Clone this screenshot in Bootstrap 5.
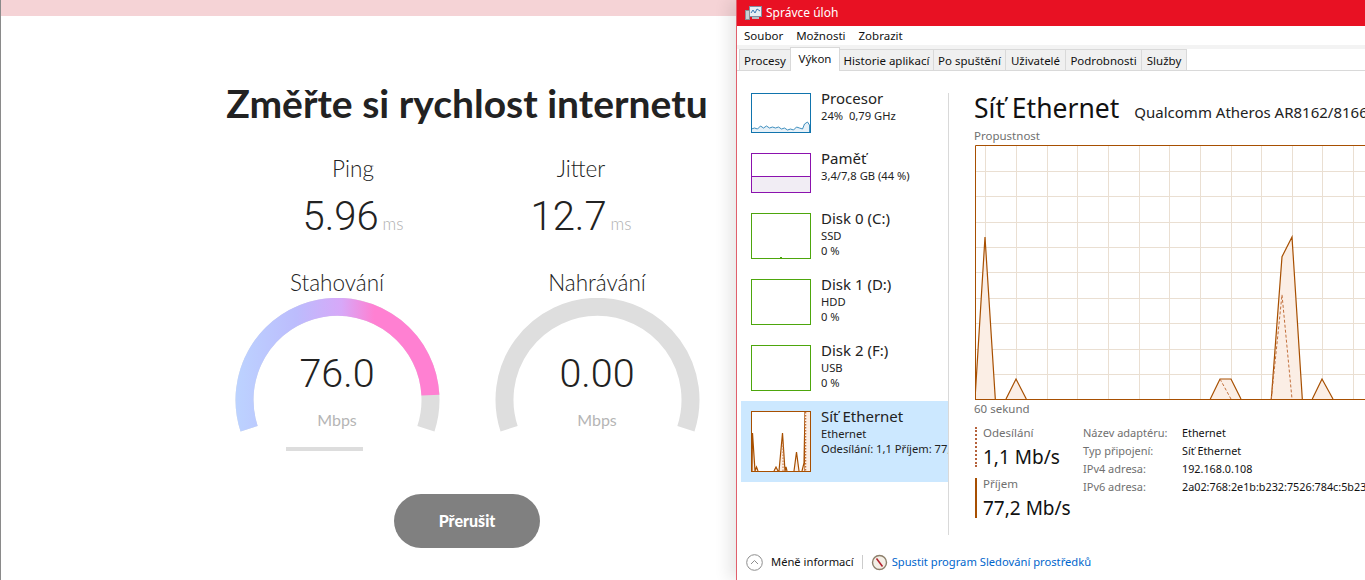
<!DOCTYPE html>
<html lang="cs">
<head>
<meta charset="utf-8">
<title>Rychlost internetu</title>
<link href="https://cdn.jsdelivr.net/npm/bootstrap@5.3.0/dist/css/bootstrap.min.css" rel="stylesheet">
<style>
html,body{height:580px;overflow:hidden;background:#fff}
.stage{width:1365px;height:580px}
.speed-pane{width:736px;height:580px;border-left:1px solid #8a8a8a;font-family:"Lato","Liberation Sans",sans-serif;color:#222}
.pink-strip{height:16px;background:#f5d3d6}
.speed-inner{padding-left:197px}
.speed-title{font-weight:700;font-size:39px;line-height:46px;margin:64px 0 0;text-align:center;color:#222}
.stat-row{width:456px;margin:29px auto 0}
.stat-col{width:228px;text-align:center}
.stat-name{font-size:22.5px;font-weight:300;line-height:28px;color:#222}
.stat-val{font-family:Roboto,sans-serif;font-size:40px;font-weight:300;line-height:46px;margin-top:11px}
.stat-unit{font-family:"Lato",sans-serif;font-size:17px;font-weight:300;color:#b0b0b0;margin-left:4px}
.gauge-row{width:520px;margin:22px auto 0}
.gauge-col{width:260px;text-align:center}
.gauge-name{font-size:22.5px;font-weight:300;line-height:28px;color:#222}
.gauge-wrap{width:205px;height:136px;margin:1px auto 0;position:relative}
.gauge-num{position:absolute;left:0;right:0;top:53px;font-size:39.5px;font-family:Roboto,sans-serif;font-weight:300;line-height:46px}
.gauge-unit{position:absolute;left:0;right:0;top:111px;font-size:16px;font-weight:400;line-height:22px;color:#b5b5b5}
.prog-bar{width:77px;height:4px;background:#ddd;margin:13px 0 0 79px}
.stop-btn{width:146px;height:54px;margin-top:43px;background:#808080;border:0;color:#fff;font-weight:900;font-size:16px;padding:0}
.stop-btn:hover{background:#808080;color:#fff}
.task-win{width:629px;height:580px;border-left:1px solid #e0606c;box-shadow:-8px 0 14px rgba(0,0,0,.09);font-family:"Noto Sans","Open Sans",sans-serif;background:#fff;color:#111;overflow:hidden;font-size:11.5px;z-index:2;position:relative}
.title-strip{height:26px;background:#e81123;color:#fff;font-size:12px;padding-left:8px;gap:4px}
.menu-strip{height:19px;padding-left:7px;gap:13px;color:#111;font-size:11.5px;line-height:19px}
.tabs-strip{height:26px;background:#fff;padding:3px 0 0 3px;border-bottom:0}
.tabs-strip.nav-tabs{--bs-nav-tabs-border-width:0;border-bottom:1px solid #d9d9d9;align-items:flex-end;flex-wrap:nowrap;background:linear-gradient(#f3f3f3 0 4px,#fff 4px)}
.tab-link{height:21px;background:#f0f0f0;border:1px solid #d9d9d9;border-bottom:0;border-left-width:1px;margin-left:-1px;color:#111;font-size:11.5px;line-height:21px;padding:0;text-align:center;margin-bottom:0;text-decoration:none;white-space:nowrap}
.tab-link.on{height:24px;background:#fff;position:relative;margin-bottom:-1px;line-height:22px}
.body-area{height:465px}
.side-col{width:211px;padding:12px 0 0 4px}
.side-list{width:207px}
.side-item{display:flex;gap:10px;padding:10px 0 10px 10px;white-space:nowrap;overflow:hidden}
.side-item.sel{background:#cce8ff}
.mini-g{width:60px;flex:none;display:block}
.side-name{font-size:15px;line-height:19px;margin-top:-4px;color:#222}
.side-sub{font-size:11.2px;line-height:15px;color:#222}
.vsep{width:1px;height:442px;margin-top:22px;background:#d9d9d9;flex:none}
.main-col{padding-left:25px;flex:1;overflow:hidden;min-width:0}
.net-head{white-space:nowrap;margin-top:20px;height:34px}
.net-title{font-size:26.5px;line-height:34px;color:#111}
.net-model{font-size:15px;margin-left:15px;color:#222}
.lbl-gray{font-size:11.5px;line-height:14px;color:#707070}
.chart-box{display:block;margin-top:2px;margin-left:1px}
.stats-row{margin-top:12px;margin-left:1px}
.rate-col{width:108px;flex:none}
.rate-item{height:40px;padding-left:6px;margin-bottom:11px}
.rate-dots{border-left:2px dotted #b5623b}
.rate-line{border-left:2px solid #a74f01}
.rate-lab{font-size:11.5px;line-height:12px;color:#707070}
.rate-num{font-size:19px;line-height:28px;color:#111;white-space:nowrap;margin-top:4px}
.info-tab{display:grid;grid-template-columns:99px auto;grid-auto-rows:18px;white-space:nowrap;line-height:14px;margin-top:-1px}
.info-k{color:#707070;font-size:11px}
.info-v{color:#111;font-size:10.8px}
.foot-row{height:24px;padding-left:9px;margin-top:14px;font-size:11.2px;color:#111}
.foot-link{color:#0066cc;text-decoration:none}
.foot-sep{width:1px;height:14px;background:#ccc;margin:0 8px}
</style>
</head>
<body>
<div class="stage d-flex">
  <section class="speed-pane flex-none">
    <div class="pink-strip"></div>
    <div class="speed-inner">
      <h1 class="speed-title">Změřte si rychlost internetu</h1>
      <div class="stat-row d-flex">
        <div class="stat-col"><div class="stat-name">Ping</div><div class="stat-val">5.96<span class="stat-unit">ms</span></div></div>
        <div class="stat-col"><div class="stat-name">Jitter</div><div class="stat-val">12.7<span class="stat-unit">ms</span></div></div>
      </div>
      <div class="gauge-row d-flex">
        <div class="gauge-col">
          <div class="gauge-name">Stahování</div>
          <div class="gauge-wrap">
            <svg width="205" height="136" viewBox="0 0 205 136" fill="none">
              <defs><linearGradient id="gr" gradientUnits="userSpaceOnUse" x1="0" y1="0" x2="205" y2="0">
                <stop offset="0" stop-color="#bcd3ff"/><stop offset=".3" stop-color="#bcbcfd"/><stop offset=".52" stop-color="#d7a8f8"/><stop offset=".68" stop-color="#ff80d2"/><stop offset="1" stop-color="#ff80d2"/></linearGradient></defs>
              <path d="M14.1 130.7A93 93 0 1 1 190.9 130.7" stroke="#dedede" stroke-width="18"/>
              <path d="M14.1 130.7A93 93 0 1 1 195.4 97.1" stroke="url(#gr)" stroke-width="18"/>
            </svg>
            <div class="gauge-num">76.0</div>
            <div class="gauge-unit">Mbps</div>
          </div>
          <div class="prog-bar"></div>
        </div>
        <div class="gauge-col">
          <div class="gauge-name">Nahrávání</div>
          <div class="gauge-wrap">
            <svg width="205" height="136" viewBox="0 0 205 136" fill="none"><path d="M14.1 130.7A93 93 0 1 1 190.9 130.7" stroke="#dedede" stroke-width="18"/></svg>
            <div class="gauge-num">0.00</div>
            <div class="gauge-unit">Mbps</div>
          </div>
        </div>
      </div>
      <div class="text-center"><button class="btn rounded-pill stop-btn" type="button">Přerušit</button></div>
    </div>
  </section>

  <section class="task-win">
    <div class="title-strip d-flex align-items-center">
      <svg width="17" height="16" viewBox="0 0 17 16" fill="none"><rect x="4.5" y="1.5" width="12" height="10" fill="#e8eef4" stroke="#7d8fa3"/><path d="M6 8l2-3 2 3 2-4 3 2" stroke="#3a78b5"/><rect x="0.5" y="5.5" width="4" height="9" fill="#c9ced4" stroke="#8a8f96"/><path d="M7 12h7v2H7z" fill="#b8bec5"/></svg>
      <span>Správce úloh</span>
    </div>
    <div class="menu-strip d-flex"><span>Soubor</span><span>Možnosti</span><span>Zobrazit</span></div>
    <ul class="nav nav-tabs tabs-strip">
      <li class="nav-item"><a class="tab-link d-block" style="width:52px">Procesy</a></li>
      <li class="nav-item"><a class="tab-link on d-block" style="width:50px">Výkon</a></li>
      <li class="nav-item"><a class="tab-link d-block" style="width:95px">Historie aplikací</a></li>
      <li class="nav-item"><a class="tab-link d-block" style="width:73px">Po spuštění</a></li>
      <li class="nav-item"><a class="tab-link d-block" style="width:61px">Uživatelé</a></li>
      <li class="nav-item"><a class="tab-link d-block" style="width:77px">Podrobnosti</a></li>
      <li class="nav-item"><a class="tab-link d-block" style="width:46px">Služby</a></li>
    </ul>
    <div class="body-area d-flex">
      <div class="side-col flex-none">
        <div class="side-list">
          <div class="side-item">
            <svg class="mini-g" height="40" viewBox="0 0 60 40" fill="none"><path d="M0.5 36l3-1 3 1 3-3 3 2 3-2 3 2 3-1 3 1 3-1 3 2 3-1 3 2 3-1 3 1 3-3 3 1 3 1 2-5 3-2 2 3V39.500H.5z" fill="#e7f1f8" stroke="#1174ad" stroke-width=".8"/><rect x=".5" y=".5" width="59" height="39" stroke="#1174ad"/></svg>
            <div><div class="side-name">Procesor</div><div class="side-sub">24%&nbsp; 0,79 GHz</div></div>
          </div>
          <div class="side-item">
            <svg class="mini-g" height="40" viewBox="0 0 60 40" fill="none"><rect x=".5" y="23" width="59" height="16.500" fill="#f1edf4"/><path d="M0 23.500h60" stroke="#8b12ae"/><rect x=".5" y=".5" width="59" height="39" stroke="#8b12ae"/></svg>
            <div><div class="side-name">Paměť</div><div class="side-sub">3,4/7,8 GB (44 %)</div></div>
          </div>
          <div class="side-item">
            <svg class="mini-g" height="46" viewBox="0 0 60 46" fill="none"><rect x=".5" y=".5" width="59" height="45" stroke="#4da60c"/><path d="M29 45h2v-1h-2z" fill="#4da60c"/></svg>
            <div><div class="side-name">Disk 0 (C:)</div><div class="side-sub">SSD</div><div class="side-sub">0 %</div></div>
          </div>
          <div class="side-item">
            <svg class="mini-g" height="46" viewBox="0 0 60 46" fill="none"><rect x=".5" y=".5" width="59" height="45" stroke="#4da60c"/></svg>
            <div><div class="side-name">Disk 1 (D:)</div><div class="side-sub">HDD</div><div class="side-sub">0 %</div></div>
          </div>
          <div class="side-item">
            <svg class="mini-g" height="46" viewBox="0 0 60 46" fill="none"><rect x=".5" y=".5" width="59" height="45" stroke="#4da60c"/></svg>
            <div><div class="side-name">Disk 2 (F:)</div><div class="side-sub">USB</div><div class="side-sub">0 %</div></div>
          </div>
          <div class="side-item sel">
            <svg class="mini-g" height="61" viewBox="0 0 60 61" fill="none"><rect width="60" height="61" fill="#fff"/>
              <path d="M1 60L1.500 22 4 60M4 60l1.500-4 1.500 4M23 60l2-4 2 4M28 60l3.500-38L34 60M34 60l1-4 1 4M43 60l2.500-19L48 60M51 60l2-8 1-51v59" fill="#fbeee5" stroke="#a74f01" stroke-width="1.200"/>
              <rect x="54" y="1" width="5" height="59" fill="#fbeee5"/>
              <path d="M54.500 1v59" stroke="#c2703c" stroke-width="1.500" stroke-dasharray="1.500 1.500"/>
              <path d="M32 60V30" stroke="#c2703c" stroke-dasharray="1.500 1.500"/>
              <rect x=".5" y=".5" width="59" height="60" stroke="#a74f01"/></svg>
            <div><div class="side-name">Síť Ethernet</div><div class="side-sub">Ethernet</div><div class="side-sub">Odesílání: 1,1 Příjem: 77,2 Mb/s</div></div>
          </div>
        </div>
      </div>
      <div class="vsep"></div>
      <div class="main-col">
        <div class="net-head"><span class="net-title">Síť Ethernet</span><span class="net-model">Qualcomm Atheros AR8162/8166/8168 PCI-E Fast Ethernet Controller</span></div>
        <div class="lbl-gray mt-1">Propustnost</div>
        <svg class="chart-box" width="390" height="255" viewBox="0 0 390 255" fill="none">
          <path stroke="#eadfd2" d="M10.500 0V254M41.500 0V254M72.500 0V254M102.500 0V254M133.500 0V254M164.500 0V254M194.500 0V254M225.500 0V254M256.500 0V254M286.500 0V254M317.500 0V254M347.500 0V254M378.500 0V254M0 26.500H390M0 51.500H390M0 77.500H390M0 102.500H390M0 127.500H390M0 153.500H390M0 178.500H390M0 204.500H390M0 229.500H390"/>
          <path fill="#fbeee5" d="M0 254L10 92 20.300 254zM31 254L41 234 51.300 254zM235.300 254L245 234H256L266 254zM296.300 254L307 111.700 317 92 327.300 254zM337.300 254L347 234 358 254z"/>
          <path stroke="#a74f01" stroke-width="1.200" d="M0 254L10 92 20.300 254M31 254L41 234 51.300 254M235.300 254L245 234H256L266 254M296.300 254L307 111.700 317 92 327.300 254M337.300 254L347 234 358 254"/>
          <path stroke="#c2703c" stroke-dasharray="3 2" d="M245 234L256 254M296.300 254L307 149.700 317 254"/>
          <path stroke="#a74f01" d="M.5 254V.5H390M0 254.500H390"/>
        </svg>
        <div class="lbl-gray" style="line-height:12px;margin-top:3px">60 sekund</div>
        <div class="stats-row d-flex">
          <div class="rate-col">
            <div class="rate-item rate-dots"><div class="rate-lab">Odesílání</div><div class="rate-num">1,1 Mb/s</div></div>
            <div class="rate-item rate-line"><div class="rate-lab">Příjem</div><div class="rate-num">77,2 Mb/s</div></div>
          </div>
          <div class="info-tab">
            <span class="info-k">Název adaptéru:</span><span class="info-v">Ethernet</span>
            <span class="info-k">Typ připojení:</span><span class="info-v">Síť Ethernet</span>
            <span class="info-k">IPv4 adresa:</span><span class="info-v">192.168.0.108</span>
            <span class="info-k">IPv6 adresa:</span><span class="info-v">2a02:768:2e1b:b232:7526:784c:5b23:1f0a</span>
          </div>
        </div>
      </div>
    </div>
    <div class="foot-row d-flex align-items-center">
      <svg class="me-2" width="17" height="17" viewBox="0 0 17 17" fill="none"><circle cx="8.500" cy="8.500" r="7.800" stroke="#8d8d8d"/><path d="M5 10l3.500-3.500L12 10" stroke="#8d8d8d"/></svg>
      <span>Méně informací</span>
      <span class="foot-sep"></span>
      <svg class="me-1" width="17" height="17" viewBox="0 0 17 17" fill="none"><circle cx="8.500" cy="8.500" r="7" fill="#f4efe6" stroke="#8d7f6b" stroke-width="1.400"/><path d="M5.500 4.500l6 8" stroke="#b3232e" stroke-width="1.600"/></svg>
      <a class="foot-link" href="#">Spustit program Sledování prostředků</a>
    </div>
  </section>
</div>
<script src="https://cdn.jsdelivr.net/npm/bootstrap@5.3.0/dist/js/bootstrap.bundle.min.js"></script>
</body>
</html>
